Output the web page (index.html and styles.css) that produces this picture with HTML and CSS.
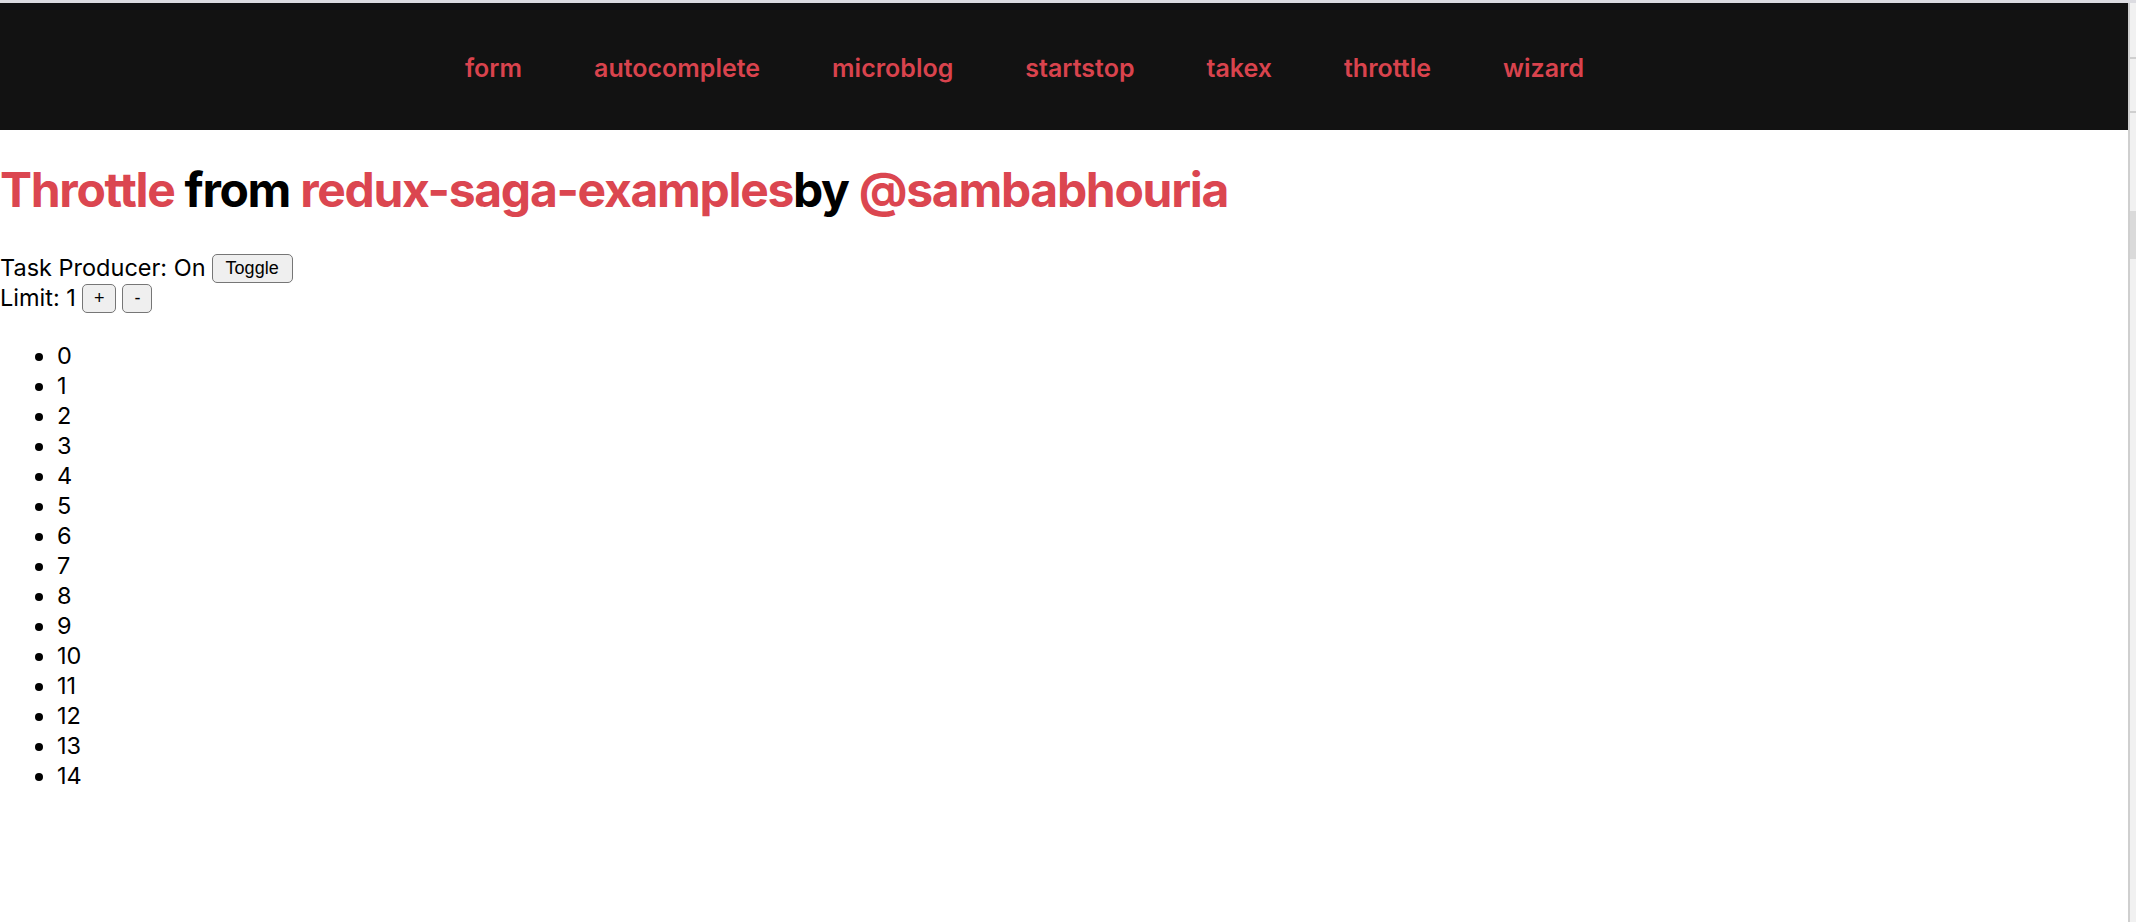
FILE: index.html
```html
<!DOCTYPE html>
<html lang="en">
<head>
<meta charset="utf-8">
<title>Throttle - redux-saga-examples</title>
<link rel="stylesheet" href="styles.css">
</head>
<body>
<div class="window">
  <div class="page">
    <nav class="topnav">
      <a class="navlink" href="#">form</a>
      <a class="navlink" href="#">autocomplete</a>
      <a class="navlink" href="#">microblog</a>
      <a class="navlink" href="#">startstop</a>
      <a class="navlink" href="#">takex</a>
      <a class="navlink" href="#">throttle</a>
      <a class="navlink" href="#">wizard</a>
    </nav>
    <main class="content">
      <h1 class="title"><span class="accent">Throttle</span> from <span class="accent">redux-saga-examples</span>by <span class="accent">@sambabhouria</span></h1>
      <div class="row">Task Producer: On <button class="btn btn-wide">Toggle</button></div>
      <div class="row">Limit: 1 <button class="btn">+</button> <button class="btn">-</button></div>
      <ul class="tasks">
        <li>0</li><li>1</li><li>2</li><li>3</li><li>4</li>
        <li>5</li><li>6</li><li>7</li><li>8</li><li>9</li>
        <li>10</li><li>11</li><li>12</li><li>13</li><li>14</li>
      </ul>
    </main>
  </div>
  <div class="scrollbar">
    <div class="sb-seg sb-top"></div>
    <div class="sb-seg sb-mid"></div>
    <div class="sb-seg sb-gap"></div>
    <div class="sb-thumb"></div>
    <div class="sb-seg sb-rest"></div>
  </div>
</div>
</body>
</html>
```

FILE: styles.css
```css
html, body {
  margin: 0;
  padding: 0;
  background: #ffffff;
}

body {
  font-family: "Inter", "Noto Sans", sans-serif;
  color: #000;
}

.window {
  display: flex;
  height: 100vh;
  border-top: 3px solid #dcdce1;
  box-sizing: border-box;
  overflow: hidden;
}

.page {
  flex: 1;
  min-width: 0;
}

.topnav {
  display: flex;
  justify-content: center;
  align-items: center;
  gap: 72px;
  height: 127px;
  background: #121212;
  padding-right: 79px;
}

.navlink {
  color: #d9434d;
  text-decoration: none;
  font-weight: 600;
  font-size: 25px;
  padding-top: 2px;
}

.content {
  font-size: 23.5px;
}

.title {
  margin: 30px 0 33px;
  font-size: 48px;
  font-weight: 700;
  line-height: 60px;
  letter-spacing: -1.3px;
}

.accent {
  color: #db4650;
}

.row {
  line-height: 30px;
  display: flex;
  align-items: center;
  gap: 6px;
}

.btn {
  font-family: "Liberation Sans", Arial, sans-serif;
  font-size: 18px;
  color: #000;
  background: #efefef;
  border: 1.5px solid #767676;
  border-radius: 5px;
  padding: 0 11px;
  height: 29px;
  line-height: 26px;
}

.btn-wide {
  padding: 0 13px;
}

.tasks {
  margin: 28px 0;
  padding-left: 57px;
  line-height: 30px;
}

.scrollbar {
  width: 6px;
  border-left: 2px solid #cfcfcf;
  background: #f1f1f1;
  display: flex;
  flex-direction: column;
}

.sb-top {
  height: 54px;
  border-bottom: 2px solid #cfcfcf;
}

.sb-mid {
  height: 52px;
  border-bottom: 2px solid #cfcfcf;
}

.sb-gap {
  height: 98px;
}

.sb-thumb {
  height: 48px;
  background: #dadada;
}

.sb-rest {
  flex: 1;
}
```
